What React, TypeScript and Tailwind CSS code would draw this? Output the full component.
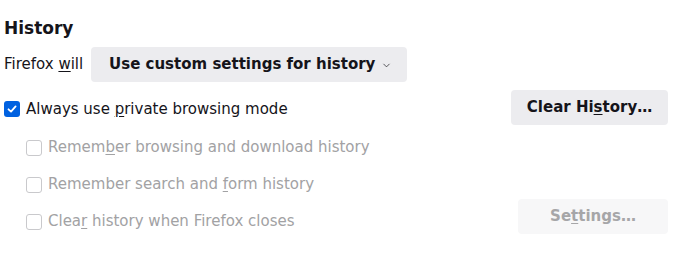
import { ChevronDown } from "lucide-react";

type SubOption = {
  before: string;
  key: string;
  after: string;
};

const SUB_OPTIONS: SubOption[] = [
  { before: "Remem", key: "b", after: "er browsing and download history" },
  { before: "Remember search and ", key: "f", after: "orm history" },
  { before: "Clea", key: "r", after: " history when Firefox closes" },
];

function Check({ checked, disabled }: { checked?: boolean; disabled?: boolean }) {
  if (checked) {
    return (
      <span className="flex h-4 w-4 shrink-0 items-center justify-center rounded-[3px] bg-[#0061e0]">
        <svg width="12" height="12" viewBox="0 0 12 12" fill="none">
          <path d="M2.5 6.3 L5 8.6 L9.6 3.4" stroke="white" strokeWidth="1.8" strokeLinecap="round" strokeLinejoin="round" />
        </svg>
      </span>
    );
  }
  return (
    <span
      className={`h-4 w-4 shrink-0 rounded-[3px] border ${
        disabled ? "border-[#c9c9cc] bg-white" : "border-[#8f8f9d] bg-white"
      }`}
    />
  );
}

export default function App() {
  return (
    <main className="h-[256px] w-[696px] bg-white pr-[28px] pl-1 pt-4 font-['DejaVu_Sans',sans-serif] text-[#15141a]">
      <h1 className="h-6 text-[17px] leading-6 font-bold">History</h1>

      <div className="mt-[7px] flex h-[35px] items-center">
        <span className="text-[15px]">
          Firefox <u className="underline-offset-2">w</u>ill
        </span>
        <button
          type="button"
          className="ml-[8px] flex h-[35px] w-[316px] items-center justify-center gap-[6px] rounded-[4px] bg-[#ececef] pl-[3px] text-[15px] font-bold"
        >
          Use custom settings for history
          <ChevronDown size={11} strokeWidth={1.5} className="mt-[2px]" />
        </button>
      </div>

      <div className="mt-[8px] flex h-[35px] items-center justify-between">
        <label className="mt-[3px] flex items-center gap-[6px] text-[15px]">
          <Check checked />
          <span>
            Always use <u className="underline-offset-2">p</u>rivate browsing mode
          </span>
        </label>
        <button
          type="button"
          className="flex h-[35px] w-[157px] items-center justify-center rounded-[4px] bg-[#ececef] text-[15px] font-bold"
        >
          Clear Hi<u className="underline-offset-2">s</u>tory…
        </button>
      </div>

      <div className="mt-[4px] flex justify-between">
        <div className="flex flex-col pl-[22px]">
          {SUB_OPTIONS.map((opt) => (
            <label key={opt.before} className="flex h-[37px] items-center gap-[6px] text-[15px] text-[#a2a2a4]">
              <Check disabled />
              <span>
                {opt.before}
                <u className="underline-offset-2">{opt.key}</u>
                {opt.after}
              </span>
            </label>
          ))}
        </div>
        <button
          type="button"
          disabled
          className="mb-[6px] flex h-[35px] w-[150px] items-center justify-center self-end rounded-[4px] bg-[#f7f7f8] text-[15px] font-bold text-[#a6a6a8]"
        >
          Se<u className="underline-offset-2">t</u>tings…
        </button>
      </div>
    </main>
  );
}
